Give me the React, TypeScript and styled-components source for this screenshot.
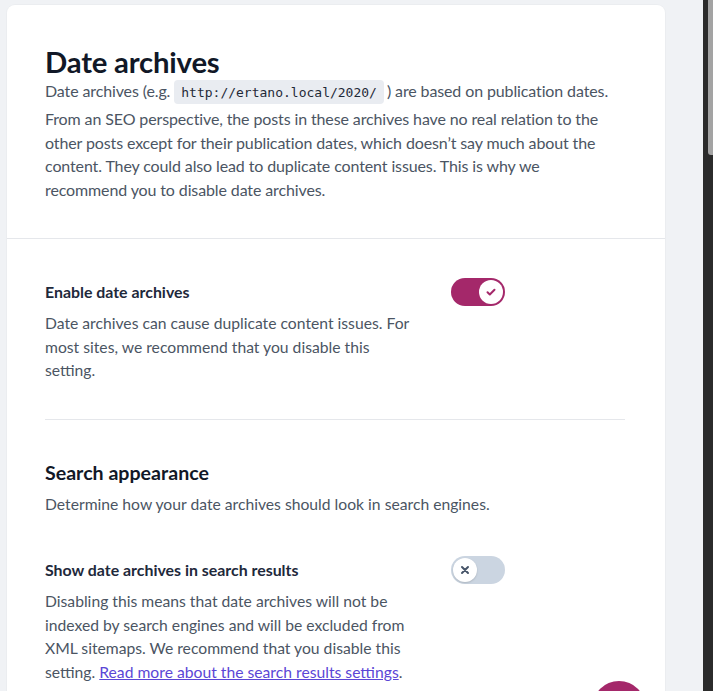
import React from "react";
import styled, { createGlobalStyle } from "styled-components";

const Global = createGlobalStyle`
  html, body { margin: 0; padding: 0; background: #f0f2f5; }
  body { font-family: Lato, "Open Sans", Arial, sans-serif; -webkit-font-smoothing: antialiased; overflow: hidden; }
  * { box-sizing: border-box; }
`;

const Page = styled.div`
  display: flex;
  padding: 5px 0 0 7px;
  min-height: 691px;
`;

const Card = styled.section`
  width: 658px;
  background: #ffffff;
  border-radius: 8px 8px 0 0;
  box-shadow: 0 0 0 1px rgba(0, 0, 0, 0.02);
`;

const Header = styled.header`
  padding: 40px 38px 37px;
  border-bottom: 1px solid #e5e7eb;
`;

const Title = styled.h1`
  margin: 0;
  font-size: 29.3px;
  line-height: 34px;
  font-weight: 700;
  color: #111827;
  letter-spacing: -0.2px;
`;

const Intro = styled.p`
  margin: 0;
  max-width: 600px;
  font-size: 16px;
  line-height: 23.5px;
  color: #4b5563;
  letter-spacing: -0.12px;
`;

const Code = styled.code`
  display: inline-block;
  font-family: "DejaVu Sans Mono", "Liberation Mono", monospace;
  font-size: 13px;
  line-height: 19px;
  padding: 3px 7px 2px;
  margin: 0 3px 3px 4px;
  background: #e9ecf1;
  border-radius: 4px;
  color: #1f2937;
  letter-spacing: 0;
`;

const Body = styled.div`
  padding: 43px 38px 0;
`;

const Field = styled.div`
  display: grid;
  grid-template-columns: 375px 55px;
  column-gap: 31px;
  align-items: start;
`;

const FieldText = styled.div`
  display: flex;
  flex-direction: column;
  gap: 10px;
`;

const Label = styled.div`
  font-size: 15.9px;
  line-height: 20px;
  font-weight: 700;
  color: #1e293b;
`;

const Desc = styled.p`
  margin: 0;
  font-size: 15.7px;
  line-height: 23.5px;
  color: #4b5563;
`;

const Link = styled.a`
  color: #5b46d6;
  text-decoration: underline;
`;

const Divider = styled.hr`
  width: 580px;
  margin: 36px 0 41px;
  border: 0;
  border-top: 1px solid #e5e7eb;
`;

const SectionTitle = styled.h2`
  margin: 0;
  font-size: 19.6px;
  line-height: 24px;
  font-weight: 700;
  color: #111827;
`;

const SectionDesc = styled(Desc)`
  margin: 8px 0 44px;
`;

const Track = styled.button<{ $on: boolean }>`
  display: flex;
  align-items: center;
  justify-content: ${(p) => (p.$on ? "flex-end" : "flex-start")};
  width: 54px;
  height: 28px;
  padding: 2px;
  margin-top: -4px;
  border: 0;
  border-radius: 14px;
  background: ${(p) => (p.$on ? "#a4286a" : "#cbd5e1")};
  cursor: pointer;
`;

const Knob = styled.span<{ $on: boolean }>`
  display: flex;
  align-items: center;
  justify-content: center;
  width: 24px;
  height: 24px;
  border-radius: 50%;
  background: #ffffff;
  box-shadow: ${(p) => (p.$on ? "none" : "0 1px 2px rgba(0,0,0,0.15)")};
  color: ${(p) => (p.$on ? "#a4286a" : "#475569")};
`;

const Toggle = ({ on }: { on: boolean }) => (
  <Track $on={on} aria-pressed={on}>
    <Knob $on={on}>
      {on ? (
        <svg width="12" height="12" viewBox="0 0 12 12" fill="none">
          <path d="M2.5 6.3l2.3 2.2 4.7-4.8" stroke="currentColor" strokeWidth="2" strokeLinecap="round" strokeLinejoin="round" />
        </svg>
      ) : (
        <svg width="10" height="10" viewBox="0 0 10 10" fill="none">
          <path d="M2 2l6 6M8 2l-6 6" stroke="currentColor" strokeWidth="2" strokeLinecap="round" />
        </svg>
      )}
    </Knob>
  </Track>
);

const Side = styled.div`
  flex: 1;
`;

const Scrollbar = styled.div`
  position: fixed;
  top: 0;
  right: 0;
  width: 10px;
  height: 100%;
  background: #2b2b2b;
`;

const Thumb = styled.div`
  margin-left: 5px;
  width: 5px;
  height: 155px;
  background: #a3a3a3;
  border-bottom-left-radius: 3px;
`;

const Beacon = styled.div`
  position: fixed;
  left: 592px;
  top: 681px;
  width: 54px;
  height: 54px;
  border-radius: 50%;
  background: #a4286a;
`;

export default function App() {
  return (
    <>
      <Global />
      <Page>
        <Card>
          <Header>
            <Title>Date archives</Title>
            <Intro>
              Date archives (e.g.<Code>http://ertano.local/2020/</Code>) are based on publication dates.
              <br />
              From an SEO perspective, the posts in these archives have no real relation to the
              <br />
              other posts except for their publication dates, which doesn’t say much about the
              <br />
              content. They could also lead to duplicate content issues. This is why we
              <br />
              recommend you to disable date archives.
            </Intro>
          </Header>
          <Body>
            <Field>
              <FieldText>
                <Label>Enable date archives</Label>
                <Desc>
                  Date archives can cause duplicate content issues. For most sites, we recommend that you
                  disable this setting.
                </Desc>
              </FieldText>
              <Toggle on={true} />
            </Field>
            <Divider />
            <SectionTitle>Search appearance</SectionTitle>
            <SectionDesc>Determine how your date archives should look in search engines.</SectionDesc>
            <Field>
              <FieldText>
                <Label>Show date archives in search results</Label>
                <Desc>
                  Disabling this means that date archives will not be indexed by search engines and will
                  be excluded from XML sitemaps. We recommend that you disable this setting.{" "}
                  <Link href="#">Read more about the search results settings</Link>.
                </Desc>
              </FieldText>
              <Toggle on={false} />
            </Field>
          </Body>
        </Card>
        <Side />
      </Page>
      <Scrollbar>
        <Thumb />
      </Scrollbar>
      <Beacon />
    </>
  );
}
